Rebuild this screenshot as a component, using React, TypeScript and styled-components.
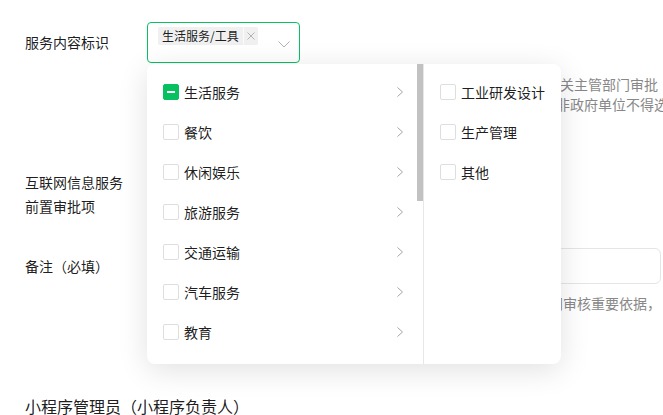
import React from 'react'
import styled, { createGlobalStyle, css } from 'styled-components'

const GlobalStyle = createGlobalStyle`
  html, body {
    margin: 0;
    padding: 0;
    background: #fff;
    overflow: hidden;
  }
  body {
    font-family: "Noto Sans CJK SC", "Noto Sans", sans-serif;
    color: rgba(0, 0, 0, 0.9);
  }
`

const primaryCategories = [
  '生活服务', '餐饮', '休闲娱乐', '旅游服务', '交通运输', '汽车服务', '教育', '医疗',
  '金融业', '商业服务', '快递业与邮政', '房地产', '社交', '工具', '文娱', '政务民生',
]
const subCategories = ['工业研发设计', '生产管理', '其他']

const PANEL_HEIGHT = 300
const ROW_HEIGHT = 40
const LIST_PADDING = 8

// headless screenshots hide native scrollbars, so the thumb is drawn by hand
const thumbHeight = Math.round(
  (PANEL_HEIGHT * PANEL_HEIGHT) / (primaryCategories.length * ROW_HEIGHT + LIST_PADDING * 2),
)

type CheckState = 'off' | 'partial'

const ChevronRight = () => (
  <svg width="6" height="10" viewBox="0 0 6 10" fill="none">
    <polyline points="0.5,0.5 5.5,5 0.5,9.5" stroke="#a6a6a6" strokeWidth="1" />
  </svg>
)

const ChevronDown = () => (
  <svg width="12" height="7" viewBox="0 0 12 7" fill="none">
    <polyline points="0.5,0.5 6,6 11.5,0.5" stroke="#b2b2b2" strokeWidth="1" />
  </svg>
)

const CloseIcon = () => (
  <svg width="8" height="8" viewBox="0 0 8 8" fill="none">
    <path d="M0.5 0.5L7.5 7.5M7.5 0.5L0.5 7.5" stroke="#b3b3b3" strokeWidth="1" />
  </svg>
)

const App: React.FC = () => (
  <>
    <GlobalStyle />
    <Page>
      <Field $top={0}>
        <Label $pad={8}>服务内容标识</Label>
        <Value>
          <SelectWrap>
            <SelectBox>
              <Tags>
                <Tag>
                  生活服务/工具
                  <TagClose><CloseIcon /></TagClose>
                </Tag>
              </Tags>
              <Arrow><ChevronDown /></Arrow>
            </SelectBox>
            <Dropdown>
              <PrimaryPane>
                <OptionList>
                  {primaryCategories.map((name, i) => (
                    <Option key={name}>
                      <Checkbox $state={i === 0 ? 'partial' : 'off'} />
                      <OptionText>{name}</OptionText>
                      <ChevronRight />
                    </Option>
                  ))}
                </OptionList>
                <ScrollThumb style={{ height: thumbHeight }} />
              </PrimaryPane>
              <SubPane>
                <OptionList>
                  {subCategories.map((name) => (
                    <Option key={name}>
                      <Checkbox $state="off" />
                      <OptionText>{name}</OptionText>
                    </Option>
                  ))}
                </OptionList>
              </SubPane>
            </Dropdown>
          </SelectWrap>
          <HintBlock $top={11}>
            <Hint $indent={7}>如所选服务类目涉及互联网信息服务前置审批项，需上传已获得相关主管部门审批</Hint>
            <Hint $indent={3}>的证件或批文原件，如无相关资质请勿选择该类目；个人或企业等非政府单位不得选择</Hint>
          </HintBlock>
        </Value>
      </Field>

      <Field $top={56}>
        <Label $pad={0}>
          互联网信息服务
          <br />
          前置审批项
        </Label>
        <Value>
          <PlainText>暂不涉及</PlainText>
        </Value>
      </Field>

      <Field $top={30}>
        <Label $pad={6}>备注（必填）</Label>
        <Value>
          <Input />
          <HintBlock $top={9}>
            <Hint $indent={10}>请详细描述小程序的服务内容及使用场景，该信息将作为相关部门审核重要依据，</Hint>
            <Hint $indent={10}>请如实填写</Hint>
          </HintBlock>
        </Value>
      </Field>

      <SectionTitle>小程序管理员（小程序负责人）</SectionTitle>
    </Page>
  </>
)

const Page = styled.div`
  width: 700px;
  padding: 22px 0 0 25px;
`

const Field = styled.div<{ $top: number }>`
  display: flex;
  align-items: flex-start;
  margin-top: ${(p) => p.$top}px;
`

const Label = styled.div<{ $pad: number }>`
  width: 122px;
  flex-shrink: 0;
  padding-top: ${(p) => p.$pad}px;
  font-size: 14px;
  line-height: 24px;
`

const Value = styled.div`
  width: 514px;
  flex-shrink: 0;
`

const SelectWrap = styled.div`
  position: relative;
  width: 153px;
`

const SelectBox = styled.div`
  box-sizing: border-box;
  height: 41px;
  display: flex;
  align-items: flex-start;
  padding: 4px 9px 0 10px;
  border: 1px solid #07c160;
  border-radius: 4px;
  background: #fff;
`

const Tags = styled.div`
  flex: 1;
  display: flex;
  flex-wrap: wrap;
`

const Tag = styled.span`
  display: inline-flex;
  align-items: center;
  height: 18px;
  padding-left: 4px;
  background: #f0f0f0;
  border-radius: 2px;
  font-size: 12px;
  line-height: 18px;
  white-space: nowrap;
`

const TagClose = styled.span`
  display: flex;
  align-items: center;
  justify-content: center;
  width: 14px;
  height: 18px;
  margin-left: 4px;
  border-left: 1px solid #fafafa;
`

const Arrow = styled.span`
  display: flex;
  margin-top: 14px;
`

const Dropdown = styled.div`
  position: absolute;
  top: calc(100% + 1px);
  left: 0;
  z-index: 10;
  width: 414px;
  height: ${PANEL_HEIGHT}px;
  display: flex;
  background: #fff;
  border-radius: 8px;
  box-shadow: 0 6px 30px rgba(0, 0, 0, 0.12);
  overflow: hidden;
`

const PrimaryPane = styled.div`
  position: relative;
  box-sizing: border-box;
  width: 277px;
  height: 100%;
  flex-shrink: 0;
  overflow: hidden;
  border-right: 1px solid #e7e7e7;
`

const SubPane = styled.div`
  flex: 1;
  height: 100%;
`

const OptionList = styled.div`
  padding: ${LIST_PADDING}px 6px ${LIST_PADDING}px 0;
`

const ScrollThumb = styled.div`
  position: absolute;
  top: 0;
  right: 0;
  width: 6px;
  background: #c1c1c1;
`

const Option = styled.div`
  height: ${ROW_HEIGHT}px;
  display: flex;
  align-items: center;
  padding: 0 14px 0 16px;
  font-size: 14px;
  cursor: pointer;
`

const Checkbox = styled.span<{ $state: CheckState }>`
  position: relative;
  box-sizing: border-box;
  width: 16px;
  height: 16px;
  flex-shrink: 0;
  margin-right: 5px;
  border: 1px solid #dedede;
  border-radius: 2px;
  background: #fff;

  ${(p) => p.$state === 'partial' && css`
    border-color: #07c160;
    background: #07c160;

    &::after {
      content: '';
      position: absolute;
      left: 3px;
      top: 6px;
      width: 8px;
      height: 2px;
      background: #fff;
    }
  `}
`

const OptionText = styled.span`
  flex: 1;
  line-height: 20px;
  white-space: nowrap;
`

const HintBlock = styled.div<{ $top: number }>`
  margin-top: ${(p) => p.$top}px;
`

const Hint = styled.div<{ $indent: number }>`
  padding-left: ${(p) => p.$indent}px;
  font-size: 14px;
  line-height: 20px;
  color: #888;
  white-space: nowrap;
`

const PlainText = styled.div`
  font-size: 14px;
  line-height: 24px;
  color: #888;
`

const Input = styled.div`
  box-sizing: border-box;
  height: 36px;
  border: 1px solid #e5e5e5;
  border-radius: 6px;
`

const SectionTitle = styled.h3`
  margin: 61px 0 0;
  font-size: 16px;
  font-weight: 400;
  line-height: 24px;
`

export default App
